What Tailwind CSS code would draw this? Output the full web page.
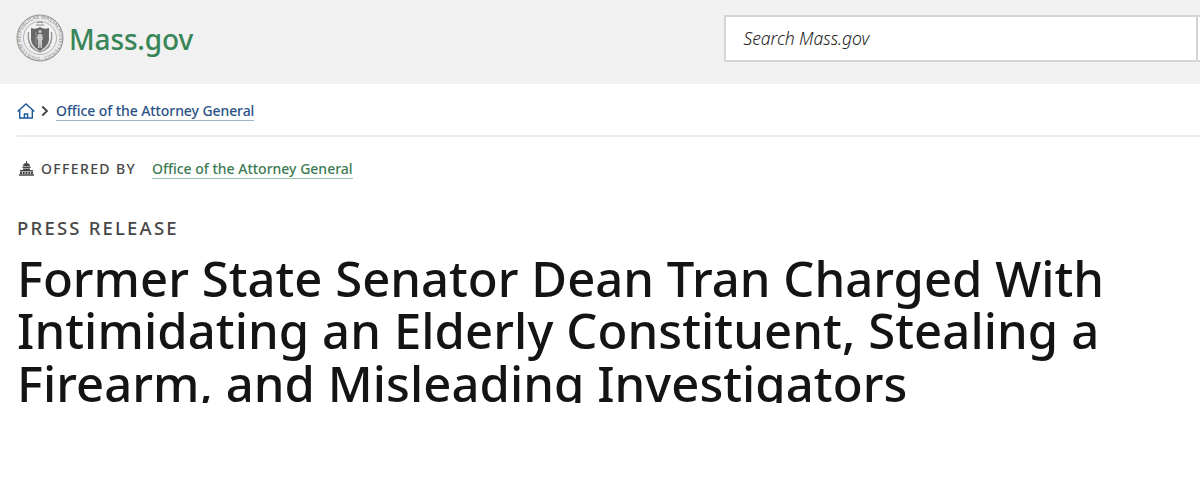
<!DOCTYPE html>
<html lang="en">
<head>
    <meta charset="UTF-8">
    <meta name="viewport" content="width=device-width, initial-scale=1.0">
    <title>Former State Senator Dean Tran Charged | Mass.gov</title>
    <script src="https://cdn.jsdelivr.net/npm/@tailwindcss/browser@4"></script>
</head>
<body class="bg-white font-['Noto_Sans',sans-serif] text-[#141414] overflow-hidden">

    <header class="h-[84px] bg-[#f1f1f1] flex items-start justify-between pl-4">
        <a href="#" class="flex items-center mt-[14px] h-[48px]">
            <!-- State seal -->
            <svg class="w-[48px] h-[48px]" viewBox="0 0 48 48" fill="none">
                <defs><path id="ring" d="M24 43.2a19.2 19.2 0 1 1 .1 0"/></defs>
                <circle cx="24" cy="24" r="23" fill="#ececec" stroke="#909090" stroke-width="1"/>
                <circle cx="24" cy="24" r="21.8" stroke="#c4c4c4" stroke-width=".6"/>
                <circle cx="24" cy="24" r="16.5" fill="#f1f1f1" stroke="#a5a5a5" stroke-width=".8"/>
                <text font-size="5" fill="#8a8a8a" textLength="116"><textPath href="#ring" textLength="116">SIGILLUM REIPUBLICAE MASSACHUSETTENSIS</textPath></text>
                <path d="M12.5 18c-1 7 1 14 7 18M35.5 18c1 7-1 14-7 18M14 32c4 4 7 5 10 6 3-1 6-2 10-6" stroke="#999" stroke-width="1.5"/>
                <path d="M20 11h8M21 9l3-1 3 1" stroke="#888"/>
                <path d="M15 14c3 1 6 1 9-1 3 2 6 2 9 1v11c0 5-4 9-9 12-5-3-9-7-9-12z" fill="#686868"/>
                <circle cx="24" cy="17.5" r="1.5" fill="#ccc"/>
                <path d="M22 20h4l1 5-1 1v8h-1.500l-.5-6-.5 6H22v-8l-1-2z" fill="#c8c8c8"/>
                <path d="M20 18v13" stroke="#aaa" stroke-width=".7"/>
            </svg>
            <span class="ml-[5px] mt-[2px] text-[28px] leading-none font-medium tracking-[-0.15px] text-[#388557]">Mass.gov</span>
        </a>
        <form class="flex mt-[15px] h-[47px] w-[476px] bg-white border-2 border-r-0 border-[#d5d5d5]">
            <label class="w-[472px] border-r-2 border-[#d5d5d5] pl-[17.5px] text-[17.5px] leading-[43px] italic font-[350] tracking-[-0.05px] text-[#222]">Search Mass.gov</label>
        </form>
    </header>

    <main class="pl-[17px]">
        <nav class="flex items-center h-[53px] pt-[3px] border-b-2 border-[#ebebeb] text-[14px] font-medium">
            <svg class="w-[18px] h-[16px]" viewBox="0 0 18 16" fill="none" stroke="#1d579b" stroke-width="1.4">
                <path d="M.6 8.500L9 1l8.400 7.500M2.700 7v8h4.700v-4h3.200v4h4.700V7M7 15h4"/>
            </svg>
            <svg class="ml-[6px] w-[8px] h-[12px]" viewBox="0 0 8 12" fill="none" stroke="#444" stroke-width="1.8">
                <path d="M1.3 1.500L6 6l-4.700 4.500"/>
            </svg>
            <a href="#" class="ml-[7px] leading-[18px] tracking-[-0.08px] border-b border-[#9db4cc] text-[#2a5286]">Office of the Attorney General</a>
        </nav>

        <div class="flex items-center h-[64px] text-[14px] font-medium">
            <svg class="ml-[2px] mb-[2px] w-[15px] h-[15px]" viewBox="0 0 15 15" fill="#474747">
                <path d="M7 0h1v2c2 .3 3 1.500 3 3H4c0-1.500 1-2.700 3-3zM3.500 5.500h8V7h-8zM4 7.500h7V9H4zM1 9h13v1.500H1zM1 11h2v2H1zm2.700 0h2v2h-2zm2.800 0h2v2h-2zm2.800 0h2v2h-2zm2.700 0h2v2h-2zM0 13.200h15v1.500H0z"/>
            </svg>
            <span class="ml-[7px] mb-[2px] tracking-[1.350px] text-[#474747]">OFFERED BY</span>
            <a href="#" class="ml-[16px] leading-[18px] border-b border-[#9cc3ab] text-[#3c7a53]">Office of the Attorney General</a>
        </div>

        <p class="mt-[14px] h-[26px] text-[18.5px] leading-[26px] font-medium tracking-[2.200px] text-[#474747]">PRESS RELEASE</p>

        <h1 class="mt-[11px] h-[151px] overflow-hidden whitespace-nowrap text-[49px] leading-[52.4px] font-medium">
            <span class="tracking-[0.02px]">Former State Senator Dean Tran Charged With</span><br>
            <span class="tracking-[0.09px]">Intimidating an Elderly Constituent, Stealing a</span><br>
            <span class="tracking-[0.05px]">Firearm, and Misleading Investigators</span>
        </h1>
    </main>

</body>
</html>
